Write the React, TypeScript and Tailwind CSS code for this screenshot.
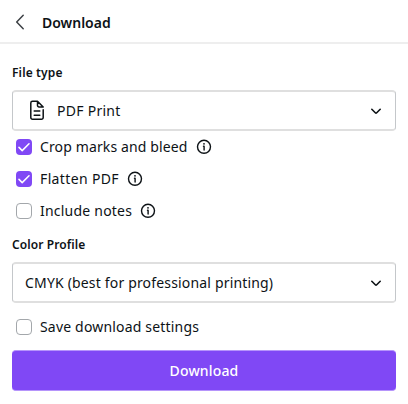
import { useState } from "react";
import clsx from "clsx";

interface CheckboxRowProps {
  label: string;
  labelClass: string;
  initial?: boolean;
  info?: boolean;
}

const ChevronDown = () => (
  <svg width="12" height="8" viewBox="0 0 12 8" fill="none" stroke="currentColor" strokeWidth="1.6" strokeLinecap="round" strokeLinejoin="round">
    <path d="M1.8 2.3 5.3 5.8q.7.7 1.4 0l3.5-3.5" />
  </svg>
);

const FileIcon = () => (
  <svg className="shrink-0" width="16" height="22" viewBox="0 0 16 22" fill="none" stroke="currentColor" strokeWidth="1.5" strokeLinecap="round" strokeLinejoin="round">
    <path d="M14.2 9.8v7.8a1.7 1.7 0 0 1-1.7 1.7h-9a1.7 1.7 0 0 1-1.7-1.7V3a1.7 1.7 0 0 1 1.7-1.7h5L14.2 7H10a1.5 1.5 0 0 1-1.5-1.5V1.3" />
    <path d="M5.2 11h5.6M5.2 15.2h5.6" />
  </svg>
);

const InfoIcon = () => (
  <svg className="shrink-0" width="16" height="16" viewBox="0 0 16 16" fill="none">
    <circle cx="8" cy="7.8" r="6.5" stroke="currentColor" strokeWidth="1.4" />
    <path d="M7.5 7.2h.6v3.9" stroke="currentColor" strokeWidth="1.4" strokeLinecap="round" strokeLinejoin="round" />
    <circle cx="8" cy="4.8" r="0.9" fill="currentColor" />
  </svg>
);

const CheckboxRow = ({ label, labelClass, initial = false, info = false }: CheckboxRowProps) => {
  const [checked, setChecked] = useState<boolean>(initial);

  return (
    <div className="flex h-8 items-center pl-1">
      <button
        role="checkbox"
        aria-checked={checked}
        aria-label={label}
        onClick={() => setChecked(!checked)}
        className={clsx(
          "flex size-4 shrink-0 items-center justify-center rounded-[4px]",
          checked ? "bg-[#8048f5]" : "border border-[#a3a7ab] bg-white"
        )}
      >
        {checked && (
          <svg width="12" height="10" viewBox="0 0 12 10" fill="none" stroke="white" strokeWidth="1.5" strokeLinecap="round" strokeLinejoin="round">
            <path d="m1 5.4 3.2 3.2L11 1.8" />
          </svg>
        )}
      </button>
      <span className={clsx("ml-2 mr-2 whitespace-nowrap text-[14px] leading-5", labelClass)}>{label}</span>
      {info && <InfoIcon />}
    </div>
  );
};

const App = () => {
  return (
    <div className="h-[404px] w-[408px] overflow-hidden bg-white font-['Noto_Sans',sans-serif] text-[#0d1216]">
      {/* Header */}
      <div className="flex h-11 items-center border-b-2 border-[#eeeeee] pl-[15px]">
        <svg className="mt-0.5" width="10" height="16" viewBox="0 0 10 16" fill="none" stroke="#3d4145" strokeWidth="1.5" strokeLinecap="round" strokeLinejoin="round">
          <path d="M8.2 1.3 1.7 8l6.5 6.7" />
        </svg>
        <h1 className="ml-[17px] mt-[3px] text-[14px] font-semibold leading-5">Download</h1>
      </div>

      <div className="px-3">
        {/* File type */}
        <div className="mt-[19px] h-5 text-[12px] font-semibold leading-5 tracking-[0.14px]">File type</div>
        <button className="mt-[7px] flex h-[41px] w-full items-center rounded-[4px] border-x border-y-2 border-x-[#c4c7ca] border-y-[#dfdfdf] pl-4 pr-[13px]">
          <FileIcon />
          <span className="ml-3 flex-1 text-left text-[14px] leading-5 tracking-[0.27px]">PDF Print</span>
          <ChevronDown />
        </button>

        {/* Options */}
        <CheckboxRow label="Crop marks and bleed" labelClass="tracking-[0.13px]" initial info />
        <CheckboxRow label="Flatten PDF" labelClass="tracking-[0.36px]" initial info />
        <CheckboxRow label="Include notes" labelClass="tracking-[0.22px]" info />

        {/* Color profile */}
        <div className="mt-2 h-5 text-[12px] font-semibold leading-5 tracking-[0.08px]">Color Profile</div>
        <button className="mt-[7px] flex h-[41px] w-full items-center rounded-[4px] border-x border-y-2 border-x-[#c4c7ca] border-y-[#dfdfdf] pl-3 pr-[13px]">
          <span className="flex-1 text-left text-[14px] leading-5 tracking-[0.17px]">CMYK (best for professional printing)</span>
          <ChevronDown />
        </button>

        <div className="mt-2">
          <CheckboxRow label="Save download settings" labelClass="tracking-[0.18px]" />
        </div>

        <button className="mt-[7px] h-[41px] w-full rounded-[4px] border-y border-[#b695fb] bg-[#8048f5] text-[14px] font-medium leading-5 tracking-[0.15px] text-white">
          Download
        </button>
      </div>
    </div>
  );
};

export default App;
